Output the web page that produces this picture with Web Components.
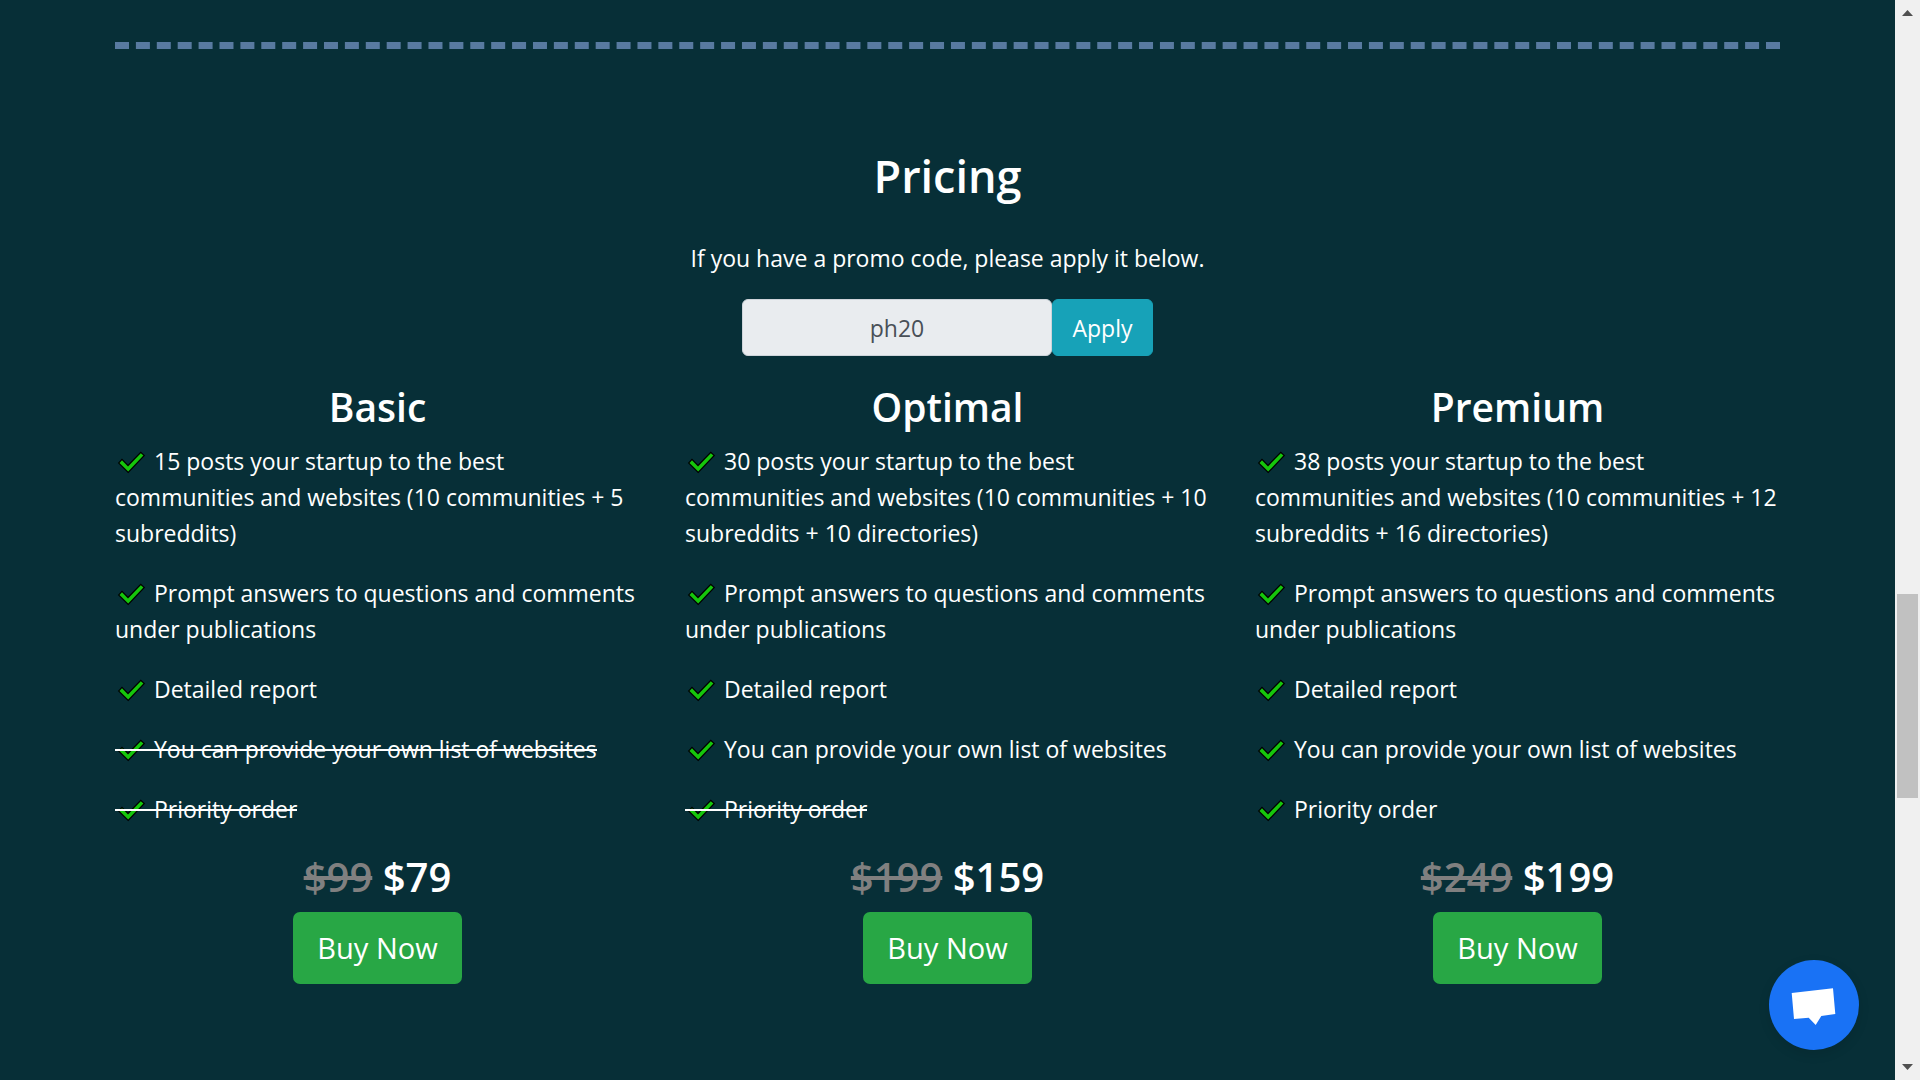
<!DOCTYPE html>
<html lang="en">
<head>
<meta charset="utf-8">
<title>Pricing</title>
<style>
  html, body { margin: 0; height: 100%; }
  body {
    background: #072f37;
    color: #fff;
    font: 400 23px/36px "Open Sans", "Noto Sans", sans-serif;
  }
</style>
</head>
<body>
<pricing-page>
  <section-rule></section-rule>
  <section-title>Pricing</section-title>
  <promo-form code="ph20">If you have a promo code, please apply it below.</promo-form>
  <plan-grid>
    <pricing-plan name="Basic" was="$99" now="$79">
      <plan-feature>15 posts your startup to the best communities and websites (10 communities + 5 subreddits)</plan-feature>
      <plan-feature>Prompt answers to questions and comments under publications</plan-feature>
      <plan-feature>Detailed report</plan-feature>
      <plan-feature excluded>You can provide your own list of websites</plan-feature>
      <plan-feature excluded>Priority order</plan-feature>
    </pricing-plan>
    <pricing-plan name="Optimal" was="$199" now="$159">
      <plan-feature>30 posts your startup to the best communities and websites (10 communities + 10 subreddits + 10 directories)</plan-feature>
      <plan-feature>Prompt answers to questions and comments under publications</plan-feature>
      <plan-feature>Detailed report</plan-feature>
      <plan-feature>You can provide your own list of websites</plan-feature>
      <plan-feature excluded>Priority order</plan-feature>
    </pricing-plan>
    <pricing-plan name="Premium" was="$249" now="$199">
      <plan-feature>38 posts your startup to the best communities and websites (10 communities + 12 subreddits + 16 directories)</plan-feature>
      <plan-feature>Prompt answers to questions and comments under publications</plan-feature>
      <plan-feature>Detailed report</plan-feature>
      <plan-feature>You can provide your own list of websites</plan-feature>
      <plan-feature>Priority order</plan-feature>
    </pricing-plan>
  </plan-grid>
</pricing-page>

<script>
const define = (name, render) => customElements.define(name, class extends HTMLElement {
  constructor() {
    super();
    this.attachShadow({ mode: "open" });
  }
  connectedCallback() {
    const template = document.createElement("template");
    template.innerHTML = render(this);
    this.shadowRoot.replaceChildren(template.content.cloneNode(true));
  }
});

define("pricing-page", () => `
  <style>
    :host { display: flex; height: 100vh; overflow: hidden; }
    main { flex: 1; min-width: 0; padding: 42px 24px 0; }
    .container { max-width: 1665px; margin: 0 auto; }
    page-scrollbar { flex: none; }
  </style>
  <main><div class="container"><slot></slot></div></main>
  <page-scrollbar></page-scrollbar>
  <chat-launcher></chat-launcher>`);

define("section-rule", () => `
  <style>
    :host { display: block; }
    hr { margin: 0; border: 0; border-top: 7px dashed #587aa0; }
  </style>
  <hr>`);

define("section-title", () => `
  <style>
    :host { display: block; margin: 98px 0 35px; }
    h1 { margin: 0; font-size: 45px; line-height: 58px; font-weight: 600; text-align: center; }
  </style>
  <h1><slot></slot></h1>`);

define("promo-form", el => `
  <style>
    :host { display: block; text-align: center; }
    label { display: block; margin-bottom: 23px; }
    form { display: flex; justify-content: center; margin: 0 0 25px; }
    input, button { box-sizing: border-box; height: 57px; margin: 0; font: inherit; border-radius: 6px; }
    input { width: 310px; padding: 9px 18px; border: 1px solid #ced4da; background: #e9ecef; color: #495057; text-align: center; }
    button { min-width: 101px; padding: 9px 18px; border: 1px solid #17a2b8; background: #17a2b8; color: #fff; }
  </style>
  <label for="code"><slot></slot></label>
  <form>
    <input id="code" type="text" value="${el.getAttribute("code")}" disabled>
    <button type="button">Apply</button>
  </form>`);

define("plan-grid", () => `
  <style>
    :host { display: grid; grid-template-columns: repeat(3, minmax(0, 1fr)); column-gap: 45px; }
  </style>
  <slot></slot>`);

define("pricing-plan", el => `
  <style>
    :host { display: block; text-align: center; }
    h2, .price { margin: 0; line-height: 52px; font-weight: 600; }
    h2 { margin-bottom: 10px; font-size: 39px; }
    .features { display: flex; flex-direction: column; gap: 24px; text-align: left; }
    .price { margin: 24px 0 9px; font-size: 40px; }
    s { color: #808080; text-decoration-thickness: 4px; }
    button { min-width: 169px; height: 72px; padding: 12px 24px; border: 0; border-radius: 7px; background: #28a745; color: #fff; font: inherit; font-size: 29px; line-height: 44px; }
  </style>
  <h2>${el.getAttribute("name")}</h2>
  <div class="features" role="list"><slot></slot></div>
  <p class="price"><s>${el.getAttribute("was")}</s> ${el.getAttribute("now")}</p>
  <button type="button">Buy Now</button>`);

define("plan-feature", () => `
  <style>
    :host { display: block; }
    span { position: relative; }
    svg { width: 33px; height: 24px; vertical-align: -4px; }
    :host([excluded]) span::after {
      content: ""; position: absolute; left: 0; right: 0; top: 50%; height: 2px; background: #fff;
    }
  </style>
  <span role="listitem"><svg viewBox="0 0 33 24" aria-hidden="true"><path d="M4.5 13 7 10.2 13 16.4 25.8 3.2 28.4 5.6 13.2 21.6Z" fill="#16c60c" stroke="#000" stroke-width="2.4" paint-order="stroke"/></svg> <slot></slot></span>`);

define("chat-launcher", () => `
  <style>
    :host { position: fixed; right: 61px; bottom: 30px; }
    button { display: block; width: 90px; height: 90px; padding: 0; border: 0; border-radius: 50%; background: #1972f5; box-shadow: 0 4px 12px rgba(0, 0, 0, .1); }
    svg { display: block; }
  </style>
  <button type="button" aria-label="Open chat">
    <svg width="90" height="90" viewBox="0 0 90 90"><path d="M22.7 33 64 28.3 66.3 54 52.3 56 46.7 65 39.7 57.7 25 59Z" fill="#fff"/></svg>
  </button>`);

define("page-scrollbar", () => `
  <style>
    :host { display: flex; flex-direction: column; width: 25px; background: #f0f0f0; }
    svg { display: block; flex: none; }
    .track { flex: 1; padding: 0 2px; display: flex; flex-direction: column; }
    .before { flex: 569; }
    .thumb { flex: 204; background: #c1c1c1; }
    .after { flex: 257; }
  </style>
  <svg width="25" height="25" viewBox="0 0 25 25"><path d="M7 16 12.5 10 18 16Z" fill="#505050"/></svg>
  <div class="track"><div class="before"></div><div class="thumb"></div><div class="after"></div></div>
  <svg width="25" height="25" viewBox="0 0 25 25"><path d="M7 9 18 9 12.5 15Z" fill="#505050"/></svg>`);
</script>
</body>
</html>
